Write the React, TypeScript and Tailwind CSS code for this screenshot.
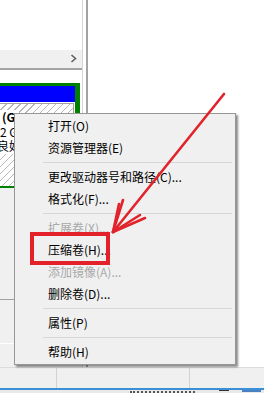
import React from "react"

type Item = { label: string; disabled?: boolean } | "sep"

const menuItems: Item[] = [
    { label: "打开(O)" },
    { label: "资源管理器(E)" },
    "sep",
    { label: "更改驱动器号和路径(C)..." },
    { label: "格式化(F)..." },
    "sep",
    { label: "扩展卷(X)...", disabled: true },
    { label: "压缩卷(H)..." },
    { label: "添加镜像(A)...", disabled: true },
    { label: "删除卷(D)..." },
    "sep",
    { label: "属性(P)" },
    "sep",
    { label: "帮助(H)" },
]

const ContextMenu = () => (
    <div className="absolute left-[14px] top-[113px] w-[222px] border border-[#979797] bg-[#f0f0f0] py-[1px] shadow-[2px_2px_2px_rgba(0,0,0,0.45)]">
        {menuItems.map((item, i) =>
            item === "sep" ? (
                <div key={i} className="flex h-[7px] items-center pl-[28px] pr-[3px]">
                    <div className="h-px w-full bg-[#d7d7d7]" />
                </div>
            ) : (
                <div
                    key={i}
                    className={
                        "h-[22px] pl-[33px] text-[12px] leading-[22px] whitespace-nowrap " +
                        (item.disabled ? "text-[#a8a8a8]" : "text-black")
                    }
                >
                    {item.label}
                </div>
            )
        )}
    </div>
)

const Arrow = () => (
    <svg
        className="pointer-events-none absolute left-0 top-0"
        width="264"
        height="394"
        viewBox="0 0 264 394"
    >
        <g stroke="#e1232b" strokeWidth="2.6" strokeLinecap="round" fill="none">
            <line x1="224" y1="94" x2="113" y2="232" />
            <line x1="113" y1="232" x2="123" y2="200" />
            <line x1="113" y1="232" x2="119" y2="204" />
            <line x1="113" y1="232" x2="145" y2="218" />
            <line x1="113" y1="232" x2="140" y2="215" />
        </g>
    </svg>
)

const App = () => {
    return (
        <div className="relative h-[394px] w-[264px] overflow-hidden bg-white font-['Microsoft_YaHei','Noto_Sans_CJK_SC',sans-serif]">
            <div className="flex h-[367px]">
                {/* left pane: volume list + disk view */}
                <div className="flex w-[82px] flex-col bg-white">
                    <div className="h-[50px]" />
                    <div className="flex h-[20px] items-start justify-end border-b-2 border-[#a3a3a3] bg-[#f0f0f0] pr-[5px] pt-[4px]">
                        <svg width="7" height="9" viewBox="0 0 7 9">
                            <polyline points="1.5,1 5.5,4.5 1.5,8" fill="none" stroke="#5f5f5f" strokeWidth="1.6" />
                        </svg>
                    </div>
                    <div className="h-[13px]" />
                    <div className="flex h-[105px] w-[80px] flex-col border-t-[3px] border-r-[5px] border-b-[2px] border-[#008000]">
                        <div className="h-[16px] bg-[#0000ff]" />
                        <div className="flex-1 bg-white pt-[1px] pr-[1px]">
                            <div className="flex h-full flex-col border-t border-r border-[#a0a0a0] bg-[image:repeating-linear-gradient(135deg,#ffffff_0px,#ffffff_4px,#b9b9b9_4px,#b9b9b9_5px)] pt-[6px] text-[12px] leading-[14.5px] text-black">
                                <span className="w-fit bg-white pl-[2px] font-bold">(G:</span>
                                <span className="w-fit bg-white">2 GB NTFS</span>
                                <span className="-ml-[3px] w-fit bg-white">良好</span>
                            </div>
                        </div>
                    </div>
                    <div className="flex flex-1 flex-col bg-[#f0f0f0]">
                        <div className="h-[112px] border-b border-[#a0a0a0]" />
                        <div className="h-[44px] border-b border-white" />
                    </div>
                </div>
                {/* splitter */}
                <div className="w-[6px] border-l border-r-2 border-l-[#d5d5d5] border-r-[#a3a3a3] bg-white" />
                <div className="flex-1 bg-white" />
            </div>
            {/* status strip */}
            <div className="flex h-[21px] border-t border-[#dcdcdc] bg-[#f0f0f0]">
                <div className="w-[57px] border-r border-[#d2d2d2]" />
                <div className="w-[133px] border-r border-[#d2d2d2]" />
                <div className="flex-1" />
            </div>
            <div className="h-[2px] bg-[#3b8fd6]" />
            <div className="flex h-[3px] items-start bg-[#e9e9e9]">
                <div className="ml-[130px] mt-[1px] h-[2px] w-[65px] border-t-2 border-dotted border-[#555555]" />
                <div className="ml-[24px] h-[3px] w-[10px] border-t border-[#333333]" />
                <div className="ml-[13px] h-[2px] w-[19px] bg-[#4a7fc0]" />
            </div>

            <ContextMenu />
            <div className="absolute left-[30px] top-[232px] h-[33px] w-[80px] border-[4px] border-[#e3212a]" />
            <Arrow />
        </div>
    )
}

export default App
